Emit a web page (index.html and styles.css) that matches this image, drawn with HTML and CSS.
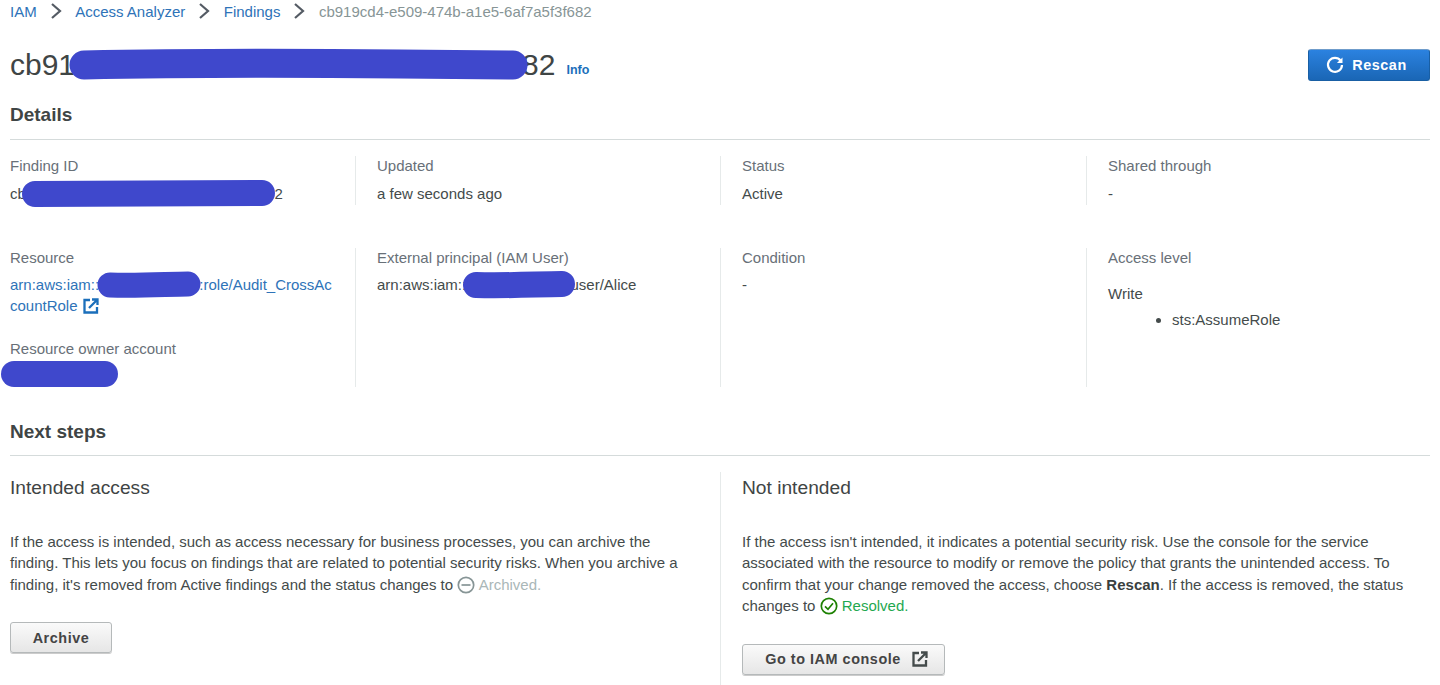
FILE: index.html
```html
<!DOCTYPE html>
<html lang="en">
<head>
<meta charset="utf-8">
<title>Finding details</title>
<link rel="stylesheet" href="styles.css">
</head>
<body>
<div class="page">
  <nav class="crumbs">
    <a class="link" href="#">IAM</a>
    <svg class="chev" viewBox="0 0 12 18"><path d="M2 2l8 7-8 7"/></svg>
    <a class="link" href="#">Access Analyzer</a>
    <svg class="chev" viewBox="0 0 12 18"><path d="M2 2l8 7-8 7"/></svg>
    <a class="link" href="#">Findings</a>
    <svg class="chev" viewBox="0 0 12 18"><path d="M2 2l8 7-8 7"/></svg>
    <span class="crumb-current">cb919cd4-e509-474b-a1e5-6af7a5f3f682</span>
  </nav>

  <header class="title-row">
    <h1 class="title">cb919cd4-e509-474b-a1e5-6af7a5f3f682</h1>
    <a class="info" href="#">Info</a>
    <button class="btn btn-primary">
      <svg class="icon-refresh" viewBox="0 0 18 18"><path d="M14.6 4.6A7 7 0 1 0 16 9"/><path class="fill" d="M16.5 1.5v5.6h-5.6z"/></svg>
      Rescan
    </button>
  </header>

  <h2 class="section-title">Details</h2>
  <div class="grid row-one">
    <div class="cell"><div class="label">Finding ID</div><div class="value">cb919cd4-e509-474b-a1e5-6af7a5f3f682</div></div>
    <div class="cell"><div class="label">Updated</div><div class="value">a few seconds ago</div></div>
    <div class="cell"><div class="label">Status</div><div class="value">Active</div></div>
    <div class="cell"><div class="label">Shared through</div><div class="value">-</div></div>
  </div>
  <div class="grid row-two">
    <div class="cell">
      <div class="label">Resource</div>
      <div class="value value-wrap"><a class="link" href="#">arn:aws:iam::123456789012:role/Audit_CrossAccountRole<svg class="icon-ext" viewBox="0 0 16 16"><path d="M7 2H1.5v12.5H14V9"/><path d="M6 10l8-8M9 1.5h5.5V7"/></svg></a></div>
      <div class="label label-second">Resource owner account</div>
      <div class="value">123456789012</div>
    </div>
    <div class="cell">
      <div class="label">External principal (IAM User)</div>
      <div class="value">arn:aws:iam::123456789012:user/Alice</div>
    </div>
    <div class="cell">
      <div class="label">Condition</div>
      <div class="value">-</div>
    </div>
    <div class="cell">
      <div class="label">Access level</div>
      <div class="value value-access">Write</div>
      <ul class="actions"><li>sts:AssumeRole</li></ul>
    </div>
  </div>

  <h2 class="section-title section-next">Next steps</h2>
  <div class="steps">
    <section class="step">
      <h3 class="step-title">Intended access</h3>
      <p class="step-text">If the access is intended, such as access necessary for business processes, you can archive the finding. This lets you focus on findings that are related to potential security risks. When you archive a finding, it's removed from Active findings and the status changes to <svg class="icon-status grey" viewBox="0 0 18 18"><circle cx="9" cy="9" r="7.7"/><path d="M4.5 9h9"/></svg> <span class="archived">Archived.</span></p>
      <button class="btn btn-normal btn-archive">Archive</button>
    </section>
    <section class="step">
      <h3 class="step-title">Not intended</h3>
      <p class="step-text">If the access isn't intended, it indicates a potential security risk. Use the console for the service associated with the resource to modify or remove the policy that grants the unintended access. To confirm that your change removed the access, choose <strong>Rescan</strong>. If the access is removed, the status changes to <svg class="icon-status green" viewBox="0 0 18 18"><circle cx="9" cy="9" r="7.7"/><path d="M5 9.3l3 3 5-6"/></svg> <span class="resolved">Resolved.</span></p>
      <button class="btn btn-normal btn-console">Go to IAM console<svg class="icon-ext dark" viewBox="0 0 16 16"><path d="M7 2H1.5v12.5H14V9"/><path d="M6 10l8-8M9 1.5h5.5V7"/></svg></button>
    </section>
  </div>
</div>

<svg class="redactions" viewBox="0 0 1440 685">
  <path d="M84 65C180 63 300 63 400 64S500 65 513 65" stroke-width="29"/>
  <path d="M35 194C100 194 200 193 262 193" stroke-width="26"/>
  <path d="M110 285C140 286 170 284 188 284" stroke-width="25"/>
  <path d="M476 285C510 286 540 284 562 284" stroke-width="26"/>
  <path d="M14 374C50 374 80 374 105 374" stroke-width="26"/>
</svg>
</body>
</html>
```

FILE: styles.css
```css
* { box-sizing: border-box; }
html, body { margin: 0; padding: 0; background: #fff; }
body {
  font-family: "Liberation Sans", Arial, sans-serif;
  font-size: 15px;
  color: #444b4b;
  height: 685px;
  overflow: hidden;
  position: relative;
}
.page { padding: 0 10px; }
.link { color: #2e73b8; text-decoration: none; }

.crumbs { display: flex; align-items: center; height: 22px; font-size: 15px; }
.chev { width: 12px; height: 18px; margin: 0 13.5px 0 13px; fill: none; stroke: #545b64; stroke-width: 2.2; }
.crumb-current { color: #879596; }

.title-row { display: flex; align-items: center; margin-top: 27px; height: 32px; }
.title { margin: 0; font-size: 30px; font-weight: 400; color: #3f4545; line-height: 32px; }
.info { color: #1b6fbb; font-size: 12.5px; font-weight: 700; margin: 10px 0 0 11px; text-decoration: none; }

.btn { font-family: inherit; font-weight: 700; font-size: 14.4px; letter-spacing: 0.55px; border-radius: 3px; display: flex; align-items: center; justify-content: center; }
.btn-primary { margin-left: auto; width: 122px; height: 32px; padding: 0 5px 0 0; color: #fff; border: 1px solid #195fa4; border-top-color: #6f9ccb; background: linear-gradient(#2b82e0, #1a66b5); }
.icon-refresh { width: 18px; height: 18px; margin-right: 8px; fill: none; stroke: #fff; stroke-width: 2.2; }
.icon-refresh .fill { fill: #fff; stroke: none; }
.btn-normal { color: #444; border: 1px solid #b5b9ba; background: linear-gradient(#fafafa, #e6e6e6); box-shadow: 0 1px 0 #ccc; height: 31px; }
.btn-archive { width: 102px; margin-top: 27px; }
.btn-console { width: 203px; margin-top: 27px; padding: 0 0 0 6px; }
.btn-console .icon-ext { margin-left: 11px; width: 16px; height: 16px; }

.section-title { margin: 0; font-size: 19px; font-weight: 700; color: #3f4545; line-height: 24px; padding-bottom: 12px; border-bottom: 1px solid #d5dbdb; }
.title-row + .section-title { margin-top: 22px; }
.section-next { margin-top: 33px; padding-bottom: 11px; }

.grid { display: grid; grid-template-columns: 346px 365px 366px 1fr; }
.row-one { margin-top: 16px; }
.row-one .cell { height: 49px; }
.row-two { margin-top: 43px; }
.row-two .cell { height: 139px; }
.cell { border-right: 1px solid #e6eaea; padding-left: 21px; }
.cell:first-child { padding-left: 0; }
.cell:last-child { border-right: 0; }
.label { color: #687078; line-height: 21px; margin-top: -1px; }
.value { line-height: 21px; margin-top: 7px; }
.row-two .value { margin-top: 6px; }
.value-wrap { overflow-wrap: anywhere; width: 325px; }
.row-two .label-second { margin-top: 22px; }
.row-two .value-access { margin-top: 15px; }
.actions { margin: 5px 0 0; padding: 0 0 0 64px; line-height: 21px; }
.icon-ext { width: 16px; height: 16px; margin-left: 5px; vertical-align: -3px; fill: none; stroke: #1b6fbb; stroke-width: 2.3; }
.icon-ext.dark { stroke: #444b4b; }

.steps { display: grid; grid-template-columns: 710px 1fr; margin-top: 16px; height: 214px; }
.step { padding: 0 22px 0 21px; border-left: 1px solid #e6eaea; }
.step:first-child { padding: 0 30px 0 0; border-left: 0; }
.step-title { margin: 0; font-size: 19.2px; font-weight: 400; color: #3f4545; line-height: 32px; }
.step-text { margin: 27px 0 0; line-height: 21.4px; }
.icon-status { width: 18px; height: 18px; vertical-align: -4px; fill: none; stroke-width: 1.7; }
.grey { stroke: #879596; }
.green { stroke: #1d8102; }
.archived { color: #aab7b8; }
.resolved { color: #1fa84f; }
.step-text strong { color: #3a3f3f; }

.redactions { position: absolute; left: 0; top: 0; width: 1440px; height: 685px; pointer-events: none; fill: none; stroke: #3f48cc; stroke-linecap: round; stroke-linejoin: round; }
```
